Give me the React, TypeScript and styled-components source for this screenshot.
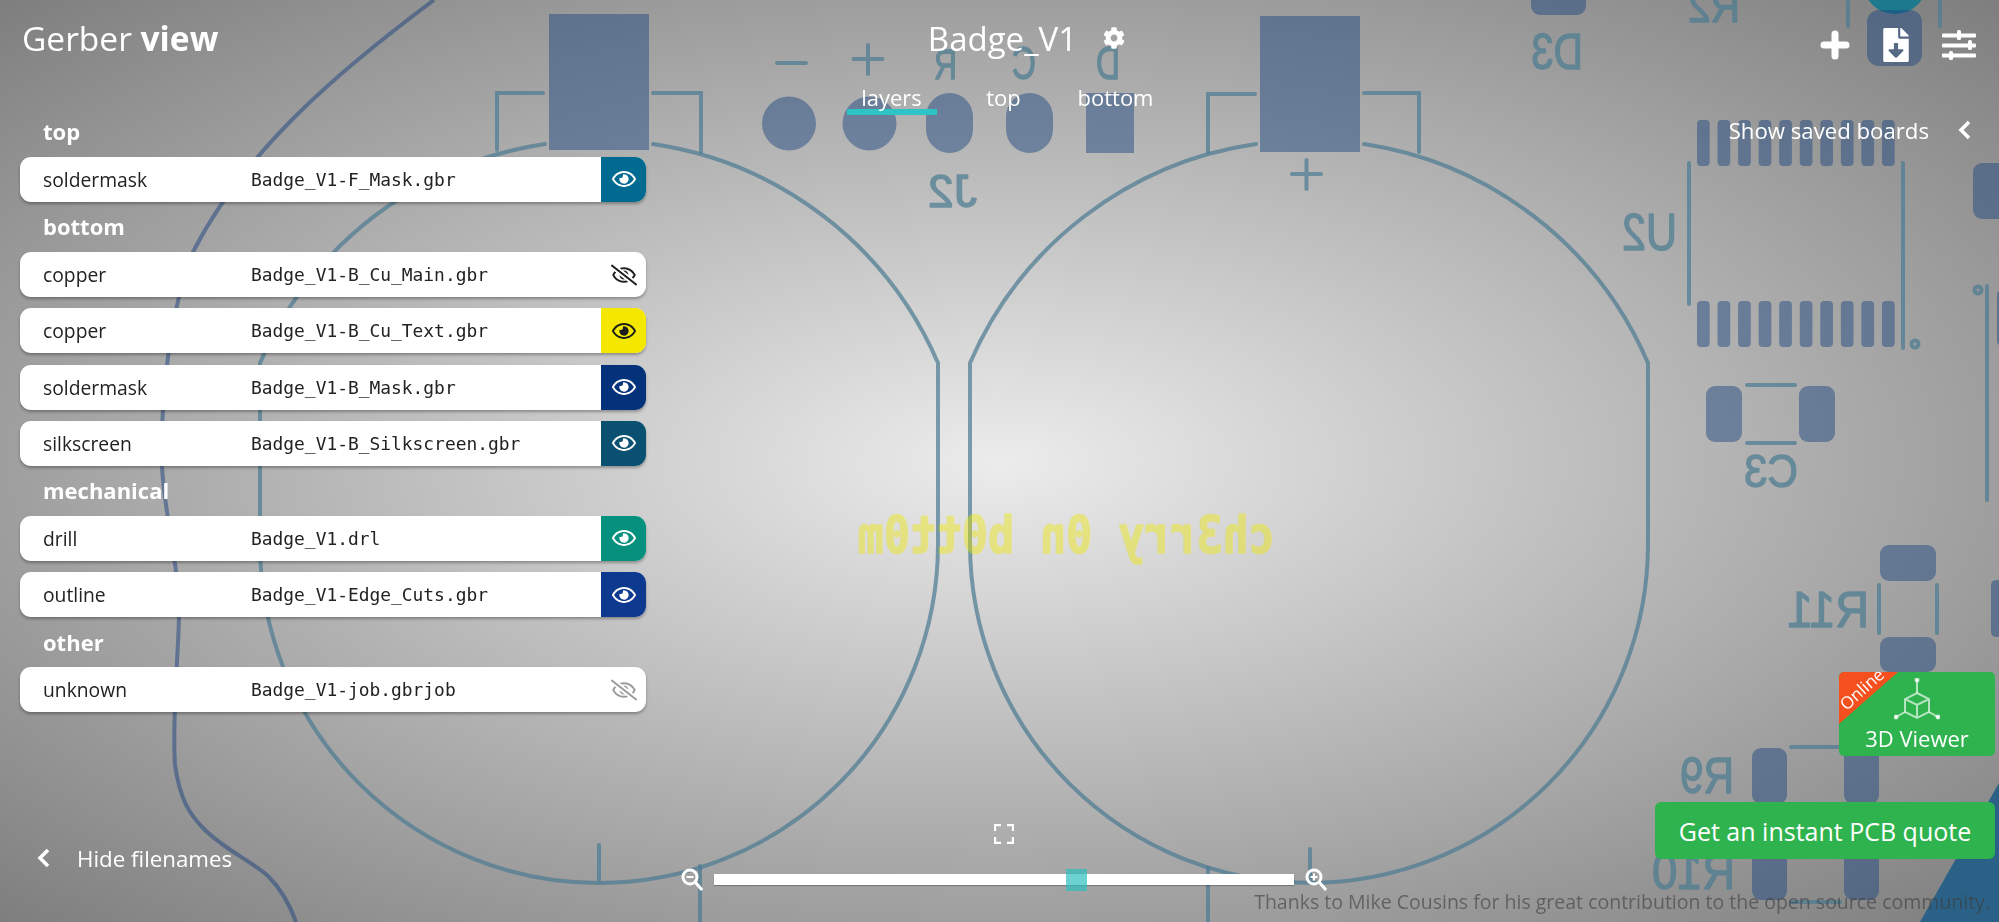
import { FaCog, FaFileDownload, FaRegEye, FaRegEyeSlash } from "react-icons/fa";
import styled, { createGlobalStyle } from "styled-components";

const GlobalStyle = createGlobalStyle`
  html, body {
    margin: 0;
    padding: 0;
    height: 100%;
    overflow: hidden;
  }
  body {
    font-family: "Open Sans", "Noto Sans", sans-serif;
    color: #fff;
  }
`;

const Page = styled.div`
  position: relative;
  width: 100vw;
  height: 100vh;
  overflow: hidden;
  background: radial-gradient(ellipse at center, #ececec 0%, #7e7e7e 100%);
`;

const Board = styled.svg`
  position: absolute;
  inset: 0;
  width: 100%;
  height: 100%;
`;

const Overlay = styled.div`
  position: absolute;
  inset: 0;
  display: flex;
  flex-direction: column;
`;

const TopBar = styled.header`
  display: grid;
  grid-template-columns: 1fr auto 1fr;
  height: 117px;
  padding: 0 4px 0 12px;
`;

const Logo = styled.h1`
  margin: 16px 0 0 10px;
  font-size: 33.5px;
  line-height: 44px;
  font-weight: 400;
  b {
    font-weight: 700;
  }
`;

const CenterColumn = styled.div`
  display: flex;
  flex-direction: column;
  align-items: center;
`;

const BoardTitle = styled.div`
  display: flex;
  align-items: center;
  gap: 26px;
  height: 44px;
  margin-top: 16px;
  padding-left: 46px;
  font-size: 33px;
  svg {
    font-size: 22px;
  }
`;

const Tabs = styled.nav`
  display: flex;
  margin-top: 24px;
`;

const Tab = styled.div<{ $active?: boolean }>`
  width: 112px;
  font-size: 22px;
  line-height: 26px;
  text-align: center;
  &::after {
    content: "";
    display: block;
    width: 90px;
    height: 6px;
    margin: -1px auto 0;
    background: ${({ $active }) => ($active ? "#2ec4c6" : "transparent")};
  }
`;

const Actions = styled.div`
  display: flex;
  justify-content: flex-end;
  align-items: center;
  gap: 29px;
  height: 36px;
  margin-top: 27px;
  padding-right: 19px;
`;

const Main = styled.main`
  flex: 1 1 0;
  min-height: 0;
  display: flex;
  justify-content: space-between;
  align-items: flex-start;
`;

const LayerPanel = styled.section`
  display: flex;
  flex-direction: column;
  gap: 11.2px;
  width: 626px;
  margin-left: 20px;
  padding-top: 1px;
`;

const GroupLabel = styled.div`
  display: flex;
  align-items: flex-end;
  height: 27.8px;
  box-sizing: border-box;
  padding: 0 0 1.5px 23px;
  font-size: 22px;
  line-height: 26px;
  font-weight: 700;
`;

const LayerRow = styled.div`
  display: flex;
  align-items: center;
  height: 45px;
  border-radius: 11px;
  overflow: hidden;
  background: #fff;
  color: #222;
  box-shadow: 0 2px 3px rgba(0, 0, 0, 0.3);
`;

const LayerType = styled.span`
  width: 208px;
  padding-left: 23px;
  font-size: 19.3px;
`;

const FileName = styled.span`
  flex: 1;
  font-family: "DejaVu Sans Mono", "Liberation Mono", monospace;
  font-size: 17.9px;
`;

const EyeButton = styled.div<{ $color?: string; $dark?: boolean; $off?: boolean }>`
  display: flex;
  align-items: center;
  justify-content: center;
  width: 45px;
  height: 100%;
  background: ${({ $color }) => $color || "transparent"};
  color: ${({ $dark, $off }) => ($off ? "#9a9a9a" : $dark ? "#1c1c1c" : "#fff")};
  font-size: 24px;
`;

const SavedToggle = styled.div`
  display: flex;
  align-items: center;
  gap: 29px;
  height: 26px;
  padding-right: 28px;
  font-size: 22.2px;
`;

const BottomBar = styled.footer`
  display: grid;
  grid-template-columns: 1fr auto 1fr;
  align-items: end;
  padding: 0 4px 31px 12px;
`;

const HideToggle = styled.div`
  display: flex;
  align-items: center;
  gap: 27px;
  height: 30px;
  margin: 0 0 18px 25px;
  font-size: 22.3px;
`;

const ZoomColumn = styled.div`
  display: flex;
  flex-direction: column;
  align-items: center;
  gap: 24px;
`;

const ZoomRow = styled.div`
  display: flex;
  align-items: center;
  gap: 11px;
`;

const Track = styled.div`
  position: relative;
  width: 580px;
  height: 11px;
  background: #fff;
  box-shadow: 0 1px 1px rgba(0, 0, 0, 0.25);
`;

const Thumb = styled.div`
  position: absolute;
  top: -5px;
  width: 21px;
  height: 22px;
  background: rgba(46, 190, 190, 0.7);
`;

const RightColumn = styled.div`
  display: flex;
  flex-direction: column;
  align-items: flex-end;
  gap: 46px;
  margin-bottom: 32px;
`;

const ViewerButton = styled.div`
  position: relative;
  display: flex;
  flex-direction: column;
  align-items: center;
  width: 156px;
  height: 84px;
  padding-top: 6px;
  box-sizing: border-box;
  border-radius: 5px;
  overflow: hidden;
  background: #2eb34e;
`;

const Ribbon = styled.div`
  position: absolute;
  top: 0;
  left: 0;
  width: 59px;
  height: 52px;
  background: #f5501e;
  clip-path: polygon(0 0, 100% 0, 0 100%);
`;

const RibbonText = styled.span`
  position: absolute;
  top: 8px;
  left: -3px;
  width: 50px;
  font-size: 17px;
  line-height: 20px;
  text-align: center;
  transform: rotate(-42deg);
`;

const ViewerLabel = styled.span`
  font-size: 22px;
  line-height: 26px;
  margin-top: 5px;
`;

const QuoteButton = styled.div`
  display: flex;
  align-items: center;
  justify-content: center;
  width: 340px;
  height: 57px;
  border-radius: 6px;
  background: #2eb34e;
  font-size: 25px;
`;

const Credit = styled.div`
  position: absolute;
  right: 9px;
  bottom: 7px;
  font-size: 19.5px;
  line-height: 26px;
  color: rgba(60, 60, 60, 0.6);
  white-space: nowrap;
`;

type Layer = { type: string; file: string; color?: string; dark?: boolean; off?: boolean; hidden?: boolean };

const groups: { name: string; layers: Layer[] }[] = [
  { name: "top", layers: [{ type: "soldermask", file: "Badge_V1-F_Mask.gbr", color: "#006a90" }] },
  {
    name: "bottom",
    layers: [
      { type: "copper", file: "Badge_V1-B_Cu_Main.gbr", dark: true, hidden: true },
      { type: "copper", file: "Badge_V1-B_Cu_Text.gbr", color: "#f5e800", dark: true },
      { type: "soldermask", file: "Badge_V1-B_Mask.gbr", color: "#03317a" },
      { type: "silkscreen", file: "Badge_V1-B_Silkscreen.gbr", color: "#0a5070" },
    ],
  },
  {
    name: "mechanical",
    layers: [
      { type: "drill", file: "Badge_V1.drl", color: "#06917f" },
      { type: "outline", file: "Badge_V1-Edge_Cuts.gbr", color: "#0d3a8e" },
    ],
  },
  { name: "other", layers: [{ type: "unknown", file: "Badge_V1-job.gbrjob", off: true, hidden: true }] },
];

const PAD = "#1c4480";
const SILK = "#4c7c92";

const Silk = ({ x, y, size, width, children }: { x: number; y: number; size: number; width: number; children: string }) => (
  <text
    transform={`translate(${x} ${y}) scale(-1 1)`}
    fontFamily="Liberation Sans, sans-serif"
    fontSize={size}
    textLength={width}
    lengthAdjust="spacingAndGlyphs"
    fill={SILK}
    stroke={SILK}
    strokeWidth={1.4}
    strokeLinejoin="round"
  >
    {children}
  </text>
);

const Pcb = () => {
  const chipPads = Array.from({ length: 10 }, (_, i) => 1697 + i * 20.55);
  return (
    <Board viewBox="0 0 1999 922">
      <circle cx={1895} cy={-18} r={32} fill="#1c7a8c" />
      <path d="M1920,922 L1999,783 L1999,922 Z" fill="#2b6187" />
      <path
        d="M434,0 C340,70 245,150 193,252 C170,310 160,400 162,467 C165,520 180,570 179,617 C178,660 172,720 175,765 C180,800 190,815 204,829 C225,850 250,860 268,876 C280,888 290,905 296,922"
        fill="none"
        stroke={PAD}
        strokeOpacity={0.5}
        strokeWidth={4}
      />
      <g fill={PAD} fillOpacity={0.47}>
        <rect x={549} y={14} width={100} height={136} />
        <rect x={1260} y={16} width={100} height={136} />
        <circle cx={789} cy={123.5} r={27} />
        <circle cx={869.5} cy={123.5} r={27} />
        <rect x={926} y={93} width={47} height={60} rx={23.5} />
        <rect x={1006} y={93} width={47} height={60} rx={23.5} />
        <rect x={1086} y={93} width={48} height={60} />
        <rect x={1531} y={-20} width={55} height={35} rx={9} />
        <rect x={1867} y={10} width={55} height={56} rx={12} />
        {chipPads.map((x) => (
          <rect key={x} x={x} y={120} width={12.7} height={46} rx={4} />
        ))}
        {chipPads.map((x) => (
          <rect key={x} x={x} y={301} width={12.7} height={46} rx={4} />
        ))}
        <rect x={1973} y={163} width={40} height={56} rx={9} />
        <rect x={1997} y={290} width={20} height={56} rx={5} />
        <rect x={1706} y={386} width={36} height={56} rx={9} />
        <rect x={1799} y={386} width={36} height={56} rx={9} />
        <rect x={1880} y={545} width={56} height={36} rx={9} />
        <rect x={1880} y={637} width={56} height={35} rx={9} />
        <rect x={1991} y={580} width={20} height={57} rx={5} />
        <rect x={1752} y={748} width={35} height={56} rx={9} />
        <rect x={1844} y={748} width={35} height={56} rx={9} />
        <rect x={1752} y={844} width={35} height={56} rx={9} />
        <rect x={1844} y={844} width={35} height={56} rx={9} />
      </g>
      <g fill="none" stroke={SILK} strokeOpacity={0.72} strokeWidth={4} strokeLinecap="round">
        <path d="M545,144 A369 369 0 0 0 260,363 L260,544 A339 339 0 0 0 938,544 L938,363 A369 369 0 0 0 653,144" />
        <path d="M1256,144 A369 369 0 0 0 970,363 L970,544 A339 339 0 0 0 1648,544 L1648,363 A369 369 0 0 0 1364,144" />
        <path d="M543,93 H497 V150 M653,93 H701 V152" />
        <path d="M1255,94 H1208 V152 M1364,93 H1419 V152" />
        <path d="M777,63 H806 M853.5,59 H882.5 M868,45 V74 M1292,174 H1321 M1306.5,160 V189" />
        <path d="M599,845 V880 M700,866 V922 M1208,868 V922 M1310,849 V880" />
        <path d="M1848,0 V26 M1940,0 V26 M1689,163 V304 M1903,163 V348 M1987,286 V500" />
        <path d="M1747,385 H1795 M1747,443 H1795" />
        <path d="M1879,585 V633 M1937,585 V633" />
        <path d="M1791,747 H1840 M1791,902 H1840" />
        <circle cx={1915} cy={344} r={3.5} />
        <circle cx={1978} cy={290} r={3.5} />
      </g>
      <g opacity={0.72}>
        <Silk x={957} y={79} size={42} width={23}>R</Silk>
        <Silk x={1036} y={79} size={46} width={24}>C</Silk>
        <Silk x={1120} y={79} size={46} width={24}>D</Silk>
        <Silk x={977} y={207} size={47} width={49}>J2</Silk>
        <Silk x={1740} y={22} size={46} width={52}>R2</Silk>
        <Silk x={1583} y={69} size={50} width={52}>D3</Silk>
        <Silk x={1677} y={250} size={51} width={55}>U2</Silk>
        <Silk x={1798} y={487} size={47} width={54}>C3</Silk>
        <Silk x={1869} y={627} size={50} width={82}>R11</Silk>
        <Silk x={1734} y={793} size={50} width={54}>R9</Silk>
        <Silk x={1735} y={889} size={50} width={83}>R10</Silk>
      </g>
      <text
        transform="translate(1275 553) scale(-1 1)"
        fontFamily="DejaVu Sans Mono, monospace"
        fontWeight={700}
        fontSize={52}
        textLength={417}
        lengthAdjust="spacingAndGlyphs"
        fill="#f0e800"
        stroke="#f0e800"
        strokeWidth={1.5}
        strokeLinejoin="round"
        opacity={0.42}
      >
        ch3rry 0n b0tt0m
      </text>
    </Board>
  );
};

const PlusIcon = () => (
  <svg width="30" height="30" viewBox="0 0 30 30">
    <path d="M15 4 V26 M4 15 H26" stroke="#fff" strokeWidth="7" strokeLinecap="round" />
  </svg>
);

const SlidersIcon = () => (
  <svg width="34" height="30" viewBox="0 0 34 30" fill="#fff">
    <rect x="0" y="3.5" width="34" height="4" rx="1" />
    <rect x="0" y="13.5" width="34" height="4" rx="1" />
    <rect x="0" y="23.5" width="34" height="4" rx="1" />
    <rect x="15" y="0" width="4" height="10" rx="1.5" />
    <rect x="26" y="10" width="4" height="10" rx="1.5" />
    <rect x="7" y="21" width="4" height="9" rx="1.5" />
  </svg>
);

const Chevron = () => (
  <svg width="13" height="20" viewBox="0 0 13 20">
    <path d="M11 2 L3 10 L11 18" fill="none" stroke="#fff" strokeWidth="3.6" />
  </svg>
);

const FullscreenIcon = () => (
  <svg width="20" height="20" viewBox="0 0 20 20">
    <path d="M1 7 V1 H7 M13 1 H19 V7 M19 13 V19 H13 M7 19 H1 V13" fill="none" stroke="#fff" strokeWidth="2.4" />
  </svg>
);

const ZoomIcon = ({ plus }: { plus?: boolean }) => (
  <svg width="22" height="23" viewBox="0 0 22 23">
    <circle cx="9" cy="9" r="7" fill="none" stroke="#fff" strokeWidth="3" />
    <path d="M14 14 L21 22" stroke="#fff" strokeWidth="3" />
    <path d={plus ? "M5.5 9 H12.5 M9 5.5 V12.5" : "M5.5 9 H12.5"} stroke="#fff" strokeWidth="2" />
  </svg>
);

const CubeIcon = () => (
  <svg width="46" height="42" viewBox="0 0 46 42" fill="none" stroke="#fff" strokeOpacity="0.65" strokeWidth="2">
    <path d="M23 15 L35 21 V34 L23 40 L11 34 V21 Z M11 21 L23 27 L35 21 M23 27 V40" />
    <path d="M23 15 V2 M35 34 L44 39 M11 34 L2 39" />
    <circle cx="23" cy="2" r="1.5" fill="#fff" />
    <circle cx="44" cy="39" r="1.5" fill="#fff" />
    <circle cx="2" cy="39" r="1.5" fill="#fff" />
  </svg>
);

const LayerGroup = ({ name, layers }: { name: string; layers: Layer[] }) => (
  <>
    <GroupLabel>{name}</GroupLabel>
    {layers.map((layer) => (
      <LayerRow key={layer.file}>
        <LayerType>{layer.type}</LayerType>
        <FileName>{layer.file}</FileName>
        <EyeButton $color={layer.color} $dark={layer.dark} $off={layer.off}>
          {layer.hidden ? <FaRegEyeSlash size={26} /> : <FaRegEye />}
        </EyeButton>
      </LayerRow>
    ))}
  </>
);

const App = () => {
  return (
    <Page>
      <GlobalStyle />
      <Pcb />
      <Overlay>
        <TopBar>
          <Logo>
            Gerber <b>view</b>
          </Logo>
          <CenterColumn>
            <BoardTitle>
              Badge_V1
              <FaCog />
            </BoardTitle>
            <Tabs>
              <Tab $active>layers</Tab>
              <Tab>top</Tab>
              <Tab>bottom</Tab>
            </Tabs>
          </CenterColumn>
          <Actions>
            <PlusIcon />
            <FaFileDownload size={34} />
            <SlidersIcon />
          </Actions>
        </TopBar>
        <Main>
          <LayerPanel>
            {groups.map((group) => (
              <LayerGroup key={group.name} name={group.name} layers={group.layers} />
            ))}
          </LayerPanel>
          <SavedToggle>
            Show saved boards
            <Chevron />
          </SavedToggle>
        </Main>
        <BottomBar>
          <HideToggle>
            <Chevron />
            Hide filenames
          </HideToggle>
          <ZoomColumn>
            <FullscreenIcon />
            <ZoomRow>
              <ZoomIcon />
              <Track>
                <Thumb style={{ left: `${(352 / 580) * 100}%` }} />
              </Track>
              <ZoomIcon plus />
            </ZoomRow>
          </ZoomColumn>
          <RightColumn>
            <ViewerButton>
              <Ribbon />
              <RibbonText>Online</RibbonText>
              <CubeIcon />
              <ViewerLabel>3D Viewer</ViewerLabel>
            </ViewerButton>
            <QuoteButton>Get an instant PCB quote</QuoteButton>
          </RightColumn>
        </BottomBar>
        <Credit>Thanks to Mike Cousins for his great contribution to the open source community.</Credit>
      </Overlay>
    </Page>
  );
};

export default App;
